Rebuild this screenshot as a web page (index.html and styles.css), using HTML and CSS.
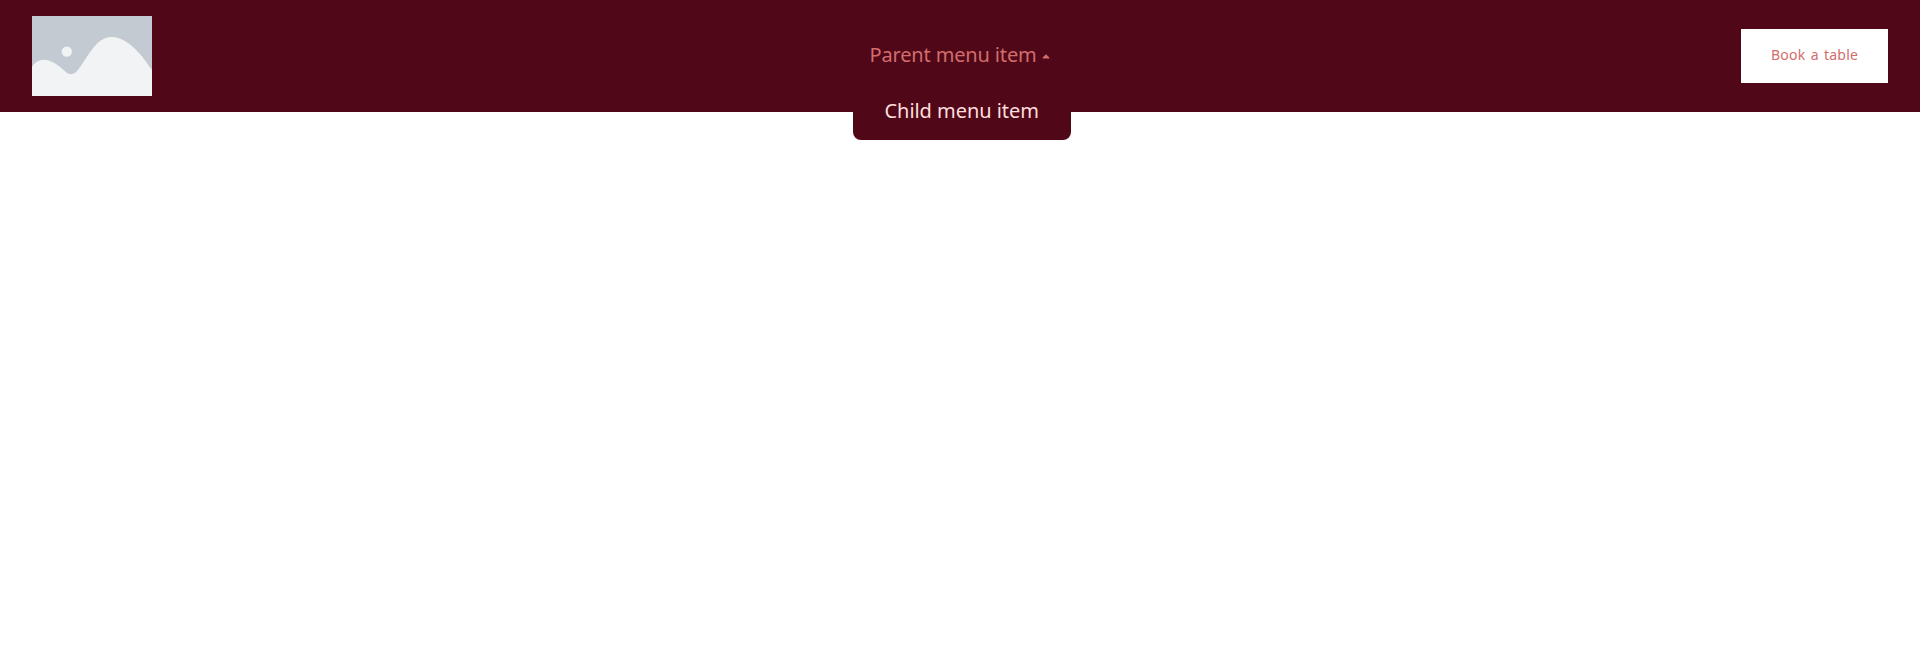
FILE: index.html
```html
<!DOCTYPE html>
<html lang="en">
<head>
<meta charset="utf-8">
<title>Restaurant</title>
<link rel="stylesheet" href="styles.css">
</head>
<body>
<header class="header">
  <a class="logo" href="#" aria-label="Home">
    <svg viewBox="0 0 120 80" width="120" height="80">
      <rect width="120" height="80" fill="#c3cad2"/>
      <circle cx="34.8" cy="35.6" r="5.2" fill="#f1f3f5"/>
      <path d="M0 51C3 46 7 43.7 12 43.7C20 43.7 28 50.500 34 56C37 59 41 59 44.500 55.500C54 46 62 21 80 21C94 21 108 36 120 54V80H0Z" fill="#f1f3f5"/>
    </svg>
  </a>
  <nav class="nav">
    <a class="nav-link" href="#"><span class="nav-label">Parent menu item</span><svg class="caret" viewBox="0 0 8 5" width="8" height="5"><path d="M4 .2L7.300 3.500Q7.800 4.600 6.800 4.600H1.200Q.2 4.600.7 3.500Z" fill="currentColor"/></svg></a>
    <div class="submenu"><a class="submenu-link" href="#">Child menu item</a></div>
  </nav>
  <a class="button" href="#">Book a table</a>
</header>
</body>
</html>
```

FILE: styles.css
```css
body {
  margin: 0;
  min-height: 100vh;
  background: #fff;
  font-family: "Noto Sans", sans-serif;
}
a {
  text-decoration: none;
}
.header {
  box-sizing: border-box;
  display: grid;
  grid-template-columns: 1fr auto 1fr;
  align-items: center;
  height: 112px;
  padding: 0 32px;
  background: #500818;
}
.logo, .logo svg {
  display: block;
}
.nav {
  position: relative;
  font-size: 20px;
  line-height: 28px;
  letter-spacing: -0.15px;
}
.nav-link {
  display: flex;
  align-items: center;
  padding: 0 18px 0 17px;
  color: #d36c6c;
}
.nav-label {
  width: 172px;
  margin: -1px 0 1px;
  white-space: nowrap;
}
.submenu {
  position: absolute;
  top: 42px;
  left: 0;
  box-sizing: border-box;
  width: 218px;
  height: 56px;
  padding: 13px 32px;
  border-radius: 0 0 8px 8px;
  background: #500818;
}
.submenu-link {
  color: #ffdede;
  letter-spacing: -0.05px;
  white-space: nowrap;
}
.button {
  justify-self: end;
  box-sizing: border-box;
  width: 147px;
  height: 54px;
  padding-left: 30px;
  background: #fff;
  color: #d36c6c;
  font-size: 14px;
  line-height: 52px;
  letter-spacing: 0.2px;
  word-spacing: 1.5px;
  white-space: nowrap;
}
```
